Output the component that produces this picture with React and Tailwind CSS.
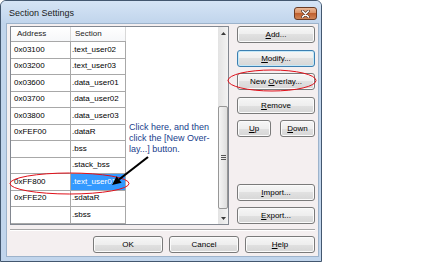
import React from 'react';

const rows = [
  ['0x03100', '.text_user02'],
  ['0x03200', '.text_user03'],
  ['0x03600', '.data_user01'],
  ['0x03700', '.data_user02'],
  ['0x03800', '.data_user03'],
  ['0xFEF00', '.dataR'],
  ['', '.bss'],
  ['', '.stack_bss'],
  ['0xFF800', '.text_user01', true],
  ['0xFFE20', '.sdataR'],
  ['', '.sbss'],
];

function Btn({ children, className = '', def = false }) {
  return (
    <button
      type="button"
      className={`flex h-[17px] items-center justify-center rounded-[3px] border bg-[linear-gradient(#f6f6f6_0%,#eeeeee_50%,#e1e1e1_50%,#d6d6d6_100%)] text-[8px] leading-none text-black ${
        def ? 'border-[#3c7fb1] shadow-[inset_0_0_0_1px_#c4e8f8]' : 'border-[#7a7a7a] shadow-[inset_0_0_0_1px_#fbfbfb]'
      } ${className}`}
    >
      {children}
    </button>
  );
}

const U = ({ children }) => <span className="underline underline-offset-[1px]">{children}</span>;

export default function App() {
  return (
    <div className="relative h-[264px] w-[434px] overflow-hidden bg-white font-['Liberation_Sans',Arial,sans-serif] text-[8px] leading-none text-black">
      {/* dialog frame */}
      <div className="flex h-[262px] w-[322px] flex-col rounded-t-[6px] border border-[#43576f] bg-[#c1d5ec]">
        {/* title bar */}
        <div className="flex h-[23px] items-start rounded-t-[5px] bg-[linear-gradient(#d5e4f5,#c1d5ec)]">
          <span className="ml-[8px] mt-[8px] text-[9px] text-[#1b1b1b]">Section Settings</span>
          <div className="ml-auto mr-[4px] mt-[6px] flex h-[13px] w-[23px] items-center justify-center rounded-[3px] border border-[#6a3b24] bg-[linear-gradient(#ebb896_0%,#d88d60_50%,#c0602f_50%,#cf8558_100%)]">
            <svg width="9" height="8" viewBox="0 0 9 8">
              <path d="M1.5 1 L7.5 7 M7.5 1 L1.5 7" stroke="#5a3a2c" strokeWidth="3" strokeLinecap="round" />
              <path d="M1.5 1 L7.5 7 M7.5 1 L1.5 7" stroke="#ffffff" strokeWidth="1.6" strokeLinecap="round" />
            </svg>
          </div>
        </div>

        {/* client area */}
        <div className="mb-[4px] ml-[5px] mr-[2px] flex flex-1 flex-col border border-[#9db3cb] bg-[#f4eff0] px-[3px] pb-[3px] pt-[2px]">
          <div className="flex h-[199px]">
            {/* list view */}
            <div className="flex h-full w-[219px] border border-[#828790] bg-white">
              <div className="flex-1">
                <div className="flex h-[15px] w-[115px] border-b border-[#a8a8a8] bg-[linear-gradient(#ffffff,#f6f7f9)] text-[#222]">
                  <div className="flex w-[60px] items-center border-r border-[#d8d8d8] pl-[6px]">Address</div>
                  <div className="flex w-[55px] items-center border-r border-[#d8d8d8] pl-[4px]">Section</div>
                </div>
                {rows.map(([addr, sec, sel], i) => (
                  <div key={i} className="flex h-[16.5px] w-[115px] border-b border-[#a8a8a8]">
                    <div className="flex w-[60px] items-center border-r border-[#a8a8a8] pl-[3px]">{addr}</div>
                    <div
                      className={`flex w-[55px] items-center border-r border-[#a8a8a8] pl-[1px] ${
                        sel ? 'bg-[#3399ff] text-white' : ''
                      }`}
                    >
                      {sec}
                    </div>
                  </div>
                ))}
              </div>
              {/* scrollbar */}
              <div className="flex w-[10px] flex-col bg-[linear-gradient(to_right,#e3e3e3,#f3f3f3)]">
                <div className="flex h-[12px] items-center justify-center">
                  <svg width="5" height="3" viewBox="0 0 5 3">
                    <polygon points="0,3 2.5,0 5,3" fill="#3a3a3a" />
                  </svg>
                </div>
                <div className="h-[67px]" />
                <div className="flex h-[103px] items-center justify-center rounded-[2px] border border-[#979797] bg-[linear-gradient(to_right,#f5f5f5,#dedede)]">
                  <div className="flex flex-col gap-[1px]">
                    <div className="h-px w-[5px] bg-[#555]" />
                    <div className="h-px w-[5px] bg-[#555]" />
                    <div className="h-px w-[5px] bg-[#555]" />
                  </div>
                </div>
                <div className="flex-1" />
                <div className="flex h-[12px] items-center justify-center">
                  <svg width="5" height="3" viewBox="0 0 5 3">
                    <polygon points="0,0 5,0 2.5,3" fill="#3a3a3a" />
                  </svg>
                </div>
              </div>
            </div>

            {/* right buttons */}
            <div className="ml-[8px] flex w-[78px] flex-col pb-[1px]">
              <Btn>
                <U>A</U>dd...
              </Btn>
              <Btn def className="mt-[7px]">
                <U>M</U>odify...
              </Btn>
              <Btn className="mt-[6px]">
                New&nbsp;<U>O</U>verlay...
              </Btn>
              <Btn className="mt-[7px]">
                <U>R</U>emove
              </Btn>
              <div className="mt-[6px] flex justify-between">
                <Btn className="w-[34px]">
                  <U>U</U>p
                </Btn>
                <Btn className="w-[35px]">
                  <U>D</U>own
                </Btn>
              </div>
              <div className="flex-1" />
              <Btn>
                <U>I</U>mport...
              </Btn>
              <Btn className="mt-[6px]">
                <U>E</U>xport...
              </Btn>
            </div>
          </div>

          {/* separator */}
          <div className="mt-[4px] h-[2px] border-y border-b-white border-t-[#a7a7a7]" />

          {/* bottom buttons */}
          <div className="mt-[5px] flex">
            <Btn className="ml-auto h-[16px] w-[70px]">OK</Btn>
            <Btn className="ml-[6px] h-[16px] w-[70px]">Cancel</Btn>
            <Btn className="ml-[6px] h-[16px] w-[70px]">
              <U>H</U>elp
            </Btn>
          </div>
        </div>
      </div>

      {/* annotation */}
      <div className="absolute left-[129px] top-[122px] text-[9px] leading-[11px] text-[#203d8c]">
        Click here, and then
        <br />
        click the [New Over-
        <br />
        lay...] button.
      </div>

      <svg className="pointer-events-none absolute left-0 top-0" width="434" height="264" viewBox="0 0 434 264">
        <ellipse cx="69.5" cy="183.5" rx="59.5" ry="10.5" fill="none" stroke="#e0101a" strokeWidth="1" />
        <ellipse cx="272" cy="80.5" rx="44" ry="10.5" fill="none" stroke="#e0101a" strokeWidth="1" />
        <line x1="148" y1="157" x2="119" y2="179.5" stroke="#000" strokeWidth="2.2" />
        <polygon points="112,185 121.6,182.7 116.6,176.3" fill="#000" />
      </svg>
    </div>
  );
}
